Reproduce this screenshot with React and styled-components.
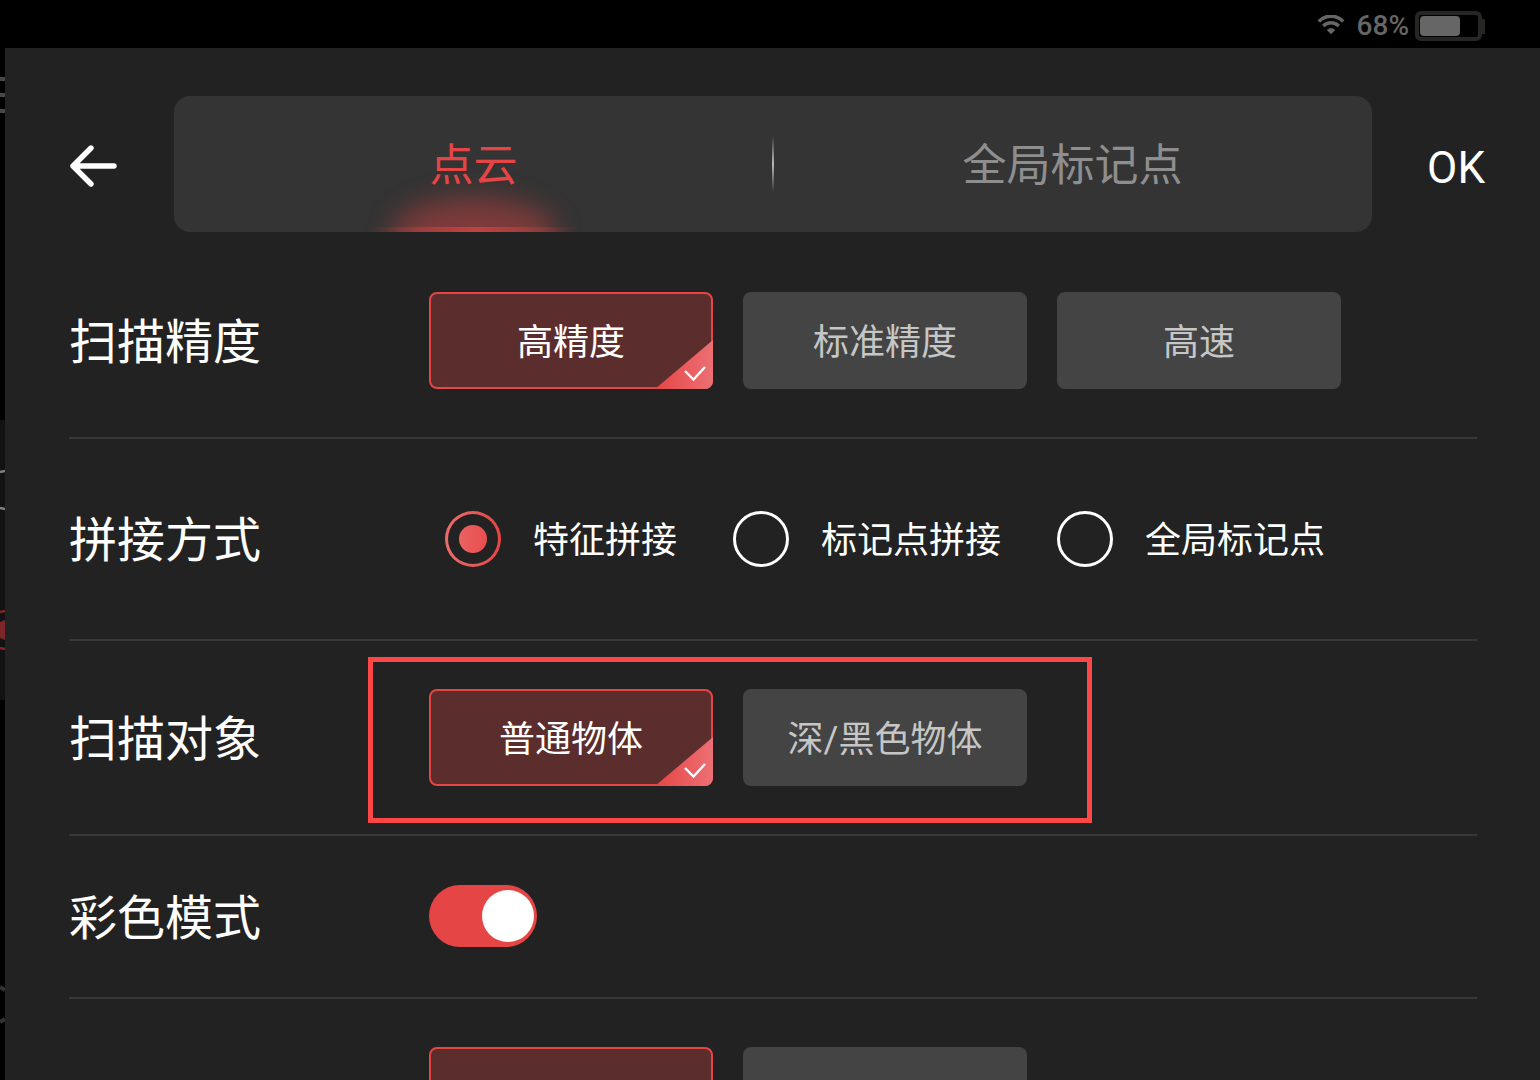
import { useState } from 'react';
import styled, { createGlobalStyle, css } from 'styled-components';

const GlobalStyle = createGlobalStyle`
  :root {
    --color-panel: #222222;
    --color-tabs: #343434;
    --color-button: #444444;
    --color-accent: #e64545;
    --color-accent-light: #ec6d6d;
    --color-line: #383838;
  }

  * {
    box-sizing: border-box;
  }

  body {
    margin: 0;
    background-color: #000;
    color: #fff;
    font-family: Roboto, 'Noto Sans CJK SC', sans-serif;
    overflow: hidden;
  }

  button {
    font-family: inherit;
    cursor: pointer;
  }
`;

const Screen = styled.div`
  display: grid;
  grid-template-rows: 48px 1fr;
  height: 100vh;
`;

const StatusBar = styled.div`
  display: flex;
  align-items: center;
  justify-content: flex-end;
  padding: 3px 55px 0 0;
  color: #666;
`;

const BatteryText = styled.span`
  margin: 0 6px 0 12px;
  font-size: 28px;
  line-height: 32px;
  font-weight: 500;
`;

const Body = styled.div`
  display: grid;
  grid-template-columns: 5px 1fr;
  min-height: 0;
  overflow: hidden;
`;

const Backdrop = styled.svg`
  display: block;
`;

const Panel = styled.main`
  background-color: var(--color-panel);
  padding-top: 48px;
  overflow: hidden;
`;

const Header = styled.header`
  display: flex;
  align-items: center;
  margin-bottom: 12px;
  padding: 0 55px 0 64px;
`;

const IconButton = styled.button`
  display: flex;
  padding: 4px 0 0;
  border: none;
  background: none;
`;

const OkButton = styled.button`
  padding: 8px 0 0;
  border: none;
  background: none;
  color: #fff;
  font-size: 44px;
  line-height: 52px;
`;

const Tabs = styled.div`
  display: flex;
  flex: 1;
  align-items: stretch;
  height: 136px;
  margin: 0 55px 0 57px;
  border-radius: 16px;
  background-color: var(--color-tabs);
  overflow: hidden;
`;

const Tab = styled.button`
  position: relative;
  isolation: isolate;
  flex: 1;
  padding: 4px 0 0;
  border: none;
  background: none;
  color: #8e8e8e;
  font-size: 44px;
  line-height: 64px;
  overflow: hidden;

  ${({ $active }) =>
    $active &&
    css`
      color: var(--color-accent);
      background: linear-gradient(
          90deg,
          rgba(230, 69, 69, 0),
          rgba(230, 69, 69, 0.66),
          rgba(230, 69, 69, 0)
        )
        50% 100% / 210px 5px no-repeat;

      &::before {
        content: '';
        position: absolute;
        z-index: -1;
        bottom: -34px;
        left: calc(50% - 82px);
        width: 164px;
        height: 68px;
        border-radius: 50%;
        background-color: var(--color-accent);
        filter: blur(14px);
        opacity: 0.42;
      }
    `}
`;

const TabDivider = styled.span`
  align-self: center;
  width: 2px;
  height: 56px;
  margin: 0 -1px;
  background: linear-gradient(
    rgba(255, 255, 255, 0),
    rgba(255, 255, 255, 0.65),
    rgba(255, 255, 255, 0)
  );
`;

const Row = styled.section`
  display: grid;
  grid-template-columns: 360px 1fr;
  align-items: center;
  margin: 0 63px 0 64px;
  padding: 48px 0;
  border-bottom: 2px solid var(--color-line);
`;

const RowTitle = styled.h2`
  margin: 0;
  padding-top: 4px;
  font-size: 48px;
  line-height: 60px;
  font-weight: 400;
`;

const Choices = styled.div`
  position: relative;
  display: flex;
  justify-self: start;
  gap: 30px;
`;

const Highlight = styled.span`
  position: absolute;
  inset: -32px -65px -37px -61px;
  border: 5px solid #ff4747;
  pointer-events: none;
`;

const ChoiceButton = styled.button`
  position: relative;
  width: 284px;
  height: 97px;
  padding: 4px 0 0;
  border: 2px solid ${({ $active }) => ($active ? 'var(--color-accent)' : 'var(--color-button)')};
  border-radius: 8px;
  background-color: ${({ $active }) => ($active ? '#5c2d2d' : 'var(--color-button)')};
  color: ${({ $active }) => ($active ? '#fff' : '#c6c6c6')};
  font-size: 36px;
  line-height: 48px;
`;

const Corner = styled.svg`
  position: absolute;
  right: -2px;
  bottom: -2px;
  border-bottom-right-radius: 8px;
`;

const RadioGroup = styled.div`
  display: flex;
  align-items: center;
  gap: 56px;
  height: 104px;
  padding-left: 16px;
`;

const RadioLabel = styled.label`
  display: flex;
  align-items: center;
  gap: 32px;
  font-size: 36px;
  line-height: 48px;
  white-space: nowrap;
  cursor: pointer;
`;

const RadioText = styled.span`
  padding-top: 4px;
`;

const Radio = styled.input`
  appearance: none;
  display: grid;
  place-items: center;
  width: 56px;
  height: 56px;
  margin: 0;
  border: 3px solid #fff;
  border-radius: 50%;

  &:checked {
    border-color: transparent;
    background:
      linear-gradient(var(--color-panel), var(--color-panel)) padding-box,
      linear-gradient(90deg, var(--color-accent-light), var(--color-accent)) border-box;
  }

  &:checked::before {
    content: '';
    width: 28px;
    height: 28px;
    border-radius: 50%;
    background: linear-gradient(90deg, #ea6262, #e84e4e);
  }
`;

const SwitchBox = styled.div`
  display: flex;
  align-items: flex-start;
  height: 65px;
  padding-top: 1px;
`;

const Switch = styled.input`
  appearance: none;
  display: flex;
  align-items: center;
  width: 108px;
  height: 62px;
  margin: 0;
  padding: 0 3px;
  border-radius: 31px;
  background-color: #555;
  cursor: pointer;

  &::before {
    content: '';
    width: 52px;
    height: 52px;
    border-radius: 50%;
    background-color: #fff;
  }

  &:checked {
    justify-content: flex-end;
    background-color: var(--color-accent);
  }
`;

const WifiIcon = () => (
  <svg width="28" height="22" viewBox="0 0 28 22" fill="none" aria-hidden="true">
    <path d="M1.8 6.4 C8.5 -0.5 19.5 -0.5 26.2 6.4" stroke="currentColor" strokeWidth="3.6" />
    <path d="M6.2 11 C10.6 6.7 17.4 6.7 21.8 11" stroke="currentColor" strokeWidth="3.4" />
    <path d="M9.8 15 C12.2 12.6 15.8 12.6 18.2 15 L14 19.2 Z" fill="currentColor" />
  </svg>
);

const BatteryIcon = () => (
  <svg width="70" height="30" viewBox="0 0 70 30" aria-hidden="true">
    <rect x="2" y="2" width="63" height="26" rx="4" fill="none" stroke="#262624" strokeWidth="4" />
    <rect x="67" y="8" width="3" height="15" fill="#262624" />
    <rect x="5" y="5" width="40" height="20" rx="4" fill="#666" />
  </svg>
);

const BackIcon = () => (
  <svg width="48" height="42" viewBox="0 0 48 42" fill="none" aria-hidden="true">
    <path
      d="M22 3 L4 21 L22 39 M4 21 H45"
      stroke="#fff"
      strokeWidth="5.4"
      strokeLinecap="round"
      strokeLinejoin="round"
    />
  </svg>
);

// Sliver of the page that stays visible behind the panel
const BackdropEdge = () => (
  <Backdrop width="5" height="1032" viewBox="0 0 5 1032" fill="none" aria-hidden="true">
    <path d="M0 31 H5 M0 47 H5 M0 63 H5" stroke="#484848" strokeWidth="4" />
    <rect y="372" width="5" height="280" fill="#121212" />
    <path d="M0 424 L5 423 M0 460 L5 461" stroke="#808080" strokeWidth="2.4" />
    <path d="M0 564 L5 563 M0 600 L5 601" stroke="#7e2629" strokeWidth="2.4" />
    <path d="M0 574 L5 572 V592 L0 590 Z" fill="#7e2629" />
    <path d="M0 939 L5 942 M0 974 L5 971" stroke="#333" strokeWidth="4" />
  </Backdrop>
);

const Choice = ({ active, children, ...rest }) => (
  <ChoiceButton type="button" $active={active} aria-pressed={active} {...rest}>
    {children}
    {active && (
      <Corner width="58" height="49" viewBox="0 0 58 49" fill="none" aria-hidden="true">
        <defs>
          <linearGradient id="corner" x1="0" y1="0" x2="1" y2="0">
            <stop offset="0" stopColor="#e64545" />
            <stop offset="1" stopColor="#ec7074" />
          </linearGradient>
        </defs>
        <path d="M0 49 L58 0 V49 Z" fill="url(#corner)" />
        <path d="M30 31 L38.5 39.5 L50 27" stroke="#fff" strokeWidth="2.4" />
      </Corner>
    )}
  </ChoiceButton>
);

const tabs = ['点云', '全局标记点'];
const accuracies = ['高精度', '标准精度', '高速'];
const alignments = ['特征拼接', '标记点拼接', '全局标记点'];
const objects = ['普通物体', '深/黑色物体'];

const App = () => {
  const [tab, setTab] = useState(tabs[0]);
  const [accuracy, setAccuracy] = useState(accuracies[0]);
  const [alignment, setAlignment] = useState(alignments[0]);
  const [object, setObject] = useState(objects[0]);
  const [color, setColor] = useState(true);
  const [extra, setExtra] = useState(0);

  return (
    <>
      <GlobalStyle />
      <Screen>
        <StatusBar>
          <WifiIcon />
          <BatteryText>68%</BatteryText>
          <BatteryIcon />
        </StatusBar>
        <Body>
          <BackdropEdge />
          <Panel>
            <Header>
              <IconButton type="button" aria-label="返回">
                <BackIcon />
              </IconButton>
              <Tabs role="tablist">
                <Tab
                  role="tab"
                  aria-selected={tab === tabs[0]}
                  $active={tab === tabs[0]}
                  onClick={() => setTab(tabs[0])}
                >
                  {tabs[0]}
                </Tab>
                <TabDivider />
                <Tab
                  role="tab"
                  aria-selected={tab === tabs[1]}
                  $active={tab === tabs[1]}
                  onClick={() => setTab(tabs[1])}
                >
                  {tabs[1]}
                </Tab>
              </Tabs>
              <OkButton type="button">OK</OkButton>
            </Header>

            <Row>
              <RowTitle>扫描精度</RowTitle>
              <Choices>
                {accuracies.map((name) => (
                  <Choice key={name} active={name === accuracy} onClick={() => setAccuracy(name)}>
                    {name}
                  </Choice>
                ))}
              </Choices>
            </Row>

            <Row>
              <RowTitle>拼接方式</RowTitle>
              <RadioGroup>
                {alignments.map((name) => (
                  <RadioLabel key={name}>
                    <Radio
                      type="radio"
                      name="alignment"
                      checked={name === alignment}
                      onChange={() => setAlignment(name)}
                    />
                    <RadioText>{name}</RadioText>
                  </RadioLabel>
                ))}
              </RadioGroup>
            </Row>

            <Row>
              <RowTitle>扫描对象</RowTitle>
              <Choices>
                {objects.map((name) => (
                  <Choice key={name} active={name === object} onClick={() => setObject(name)}>
                    {name}
                  </Choice>
                ))}
                <Highlight />
              </Choices>
            </Row>

            <Row>
              <RowTitle as="label" htmlFor="color-mode">彩色模式</RowTitle>
              <SwitchBox>
                <Switch
                  id="color-mode"
                  type="checkbox"
                  role="switch"
                  checked={color}
                  onChange={() => setColor(!color)}
                />
              </SwitchBox>
            </Row>

            <Row>
              <span />
              <Choices>
                {[0, 1].map((index) => (
                  <Choice
                    key={index}
                    active={index === extra}
                    aria-label={`选项 ${index + 1}`}
                    onClick={() => setExtra(index)}
                  />
                ))}
              </Choices>
            </Row>
          </Panel>
        </Body>
      </Screen>
    </>
  );
};

export default App;
